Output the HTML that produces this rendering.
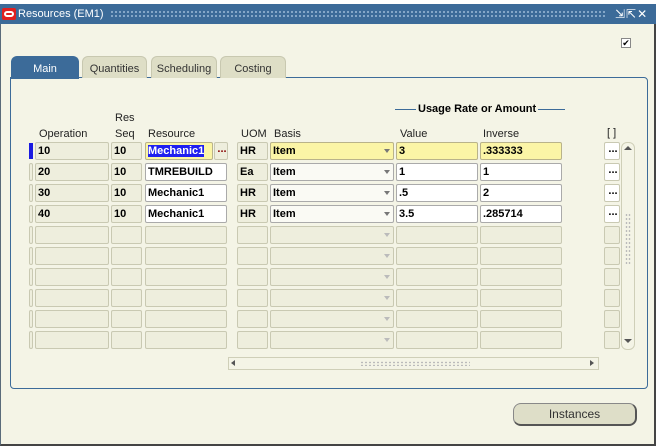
<!DOCTYPE html>
<html><head><meta charset="utf-8"><style>
*{box-sizing:border-box;margin:0;padding:0}
body{width:660px;height:448px;background:#fff;position:relative;overflow:hidden;font-family:"Liberation Sans",sans-serif;font-size:11px;color:#000}
.a{position:absolute}
.win{left:0;top:4px;width:656px;height:442px;background:#f4f4e6;border:1px solid #5a6b7a;border-right:2px solid #444;border-bottom:2px solid #444}
.title{left:0;top:4px;width:656px;height:20px;background:#3c6b99}
.dots{left:110px;top:10px;width:495px;height:9px;background-image:radial-gradient(#8fb0cf 35%,transparent 40%);background-size:4px 4px}
.tab{top:56px;height:22px;border-radius:6px 6px 0 0;background:#dedec6;font-size:11px;text-align:center;line-height:24px;color:#333;border:1px solid #c8c8b0;border-bottom:none}
.panel{left:10px;top:77px;width:638px;height:312px;border:1px solid #3c6b99;border-radius:0 4px 4px 4px}
.f{height:18px;border:1px solid #c9c9b2;background:#eeeedd;border-radius:2px;font-weight:bold;font-size:11px;line-height:16px;padding-left:2px}
.w{background:#fff;border-color:#aaa;}
.y{background:#fbf5a6;border-color:#b9b38a}
.lab{font-size:11px;color:#222}
.ar{position:absolute;right:3px;top:6px;width:0;height:0;border-left:3px solid transparent;border-right:3px solid transparent;border-top:4px solid #777}
.ind{width:4px;height:18px;border:1px solid #c9c9b2;border-radius:2px;background:#eeeedd}
.dd{font-weight:bold;text-align:center;line-height:12px}
</style></head><body>
<div class="a win"></div>
<div class="a title"></div>
<div class="a" style="left:2px;top:8px;width:14px;height:12px;background:#e02020;border-radius:2px"></div>
<div class="a" style="left:4px;top:11px;width:10px;height:6px;border:2px solid #fff;border-radius:4px"></div>
<div class="a" style="left:18px;top:8px;color:#fff;font-size:11px">Resources (EM1)</div>
<div class="a dots"></div>
<div class="a" style="left:615px;top:7px;color:#fff;font-size:12px;letter-spacing:1px">⇲⇱✕</div>
<div class="a" style="left:621px;top:38px;width:10px;height:10px;border:1px solid #888;background:#fff;font-size:9px;line-height:8px;text-align:center">✔</div>

<div class="a panel"></div>
<div class="a tab" style="left:11px;width:68px;background:#3c6b99;color:#fff;border-color:#3c6b99;height:23px">Main</div>
<div class="a tab" style="left:82px;width:65px">Quantities</div>
<div class="a tab" style="left:151px;width:66px">Scheduling</div>
<div class="a tab" style="left:220px;width:66px">Costing</div>

<div class="a" style="left:395px;top:109px;width:170px;border-top:1px solid #3c6b99"></div>
<div class="a" style="left:416px;top:103px;background:#f4f4e6;padding:0 2px;font-weight:bold;font-size:11px">Usage Rate or Amount</div>
<div class="a lab" style="left:115px;top:112px">Res</div>
<div class="a lab" style="left:39px;top:128px">Operation</div>
<div class="a lab" style="left:115px;top:128px">Seq</div>
<div class="a lab" style="left:148px;top:128px">Resource</div>
<div class="a lab" style="left:241px;top:128px">UOM</div>
<div class="a lab" style="left:274px;top:128px">Basis</div>
<div class="a lab" style="left:400px;top:128px">Value</div>
<div class="a lab" style="left:483px;top:128px">Inverse</div>
<div class="a lab" style="left:607px;top:127px">[ ]</div>

<div class="a" style="left:29px;top:143px;width:4px;height:16px;background:#1a1ae0"></div>
<div class="a f" style="left:35px;top:142px;width:74px">10</div>
<div class="a f" style="left:111px;top:142px;width:31px">10</div>
<div class="a f y" style="left:145px;top:142px;width:68px"><span style="background:#1f1ff0;color:#fff">Mechanic1</span></div>
<div class="a f dd" style="left:214px;top:142px;width:14px;color:#800">...</div>
<div class="a f" style="left:237px;top:142px;width:31px">HR</div>
<div class="a f y" style="left:270px;top:142px;width:124px">Item<i class="ar"></i></div>
<div class="a f y" style="left:396px;top:142px;width:82px">3</div>
<div class="a f y" style="left:480px;top:142px;width:82px">.333333</div>
<div class="a f dd" style="left:604px;top:142px;width:16px;background:#fff">...</div>
<div class="a ind" style="left:29px;top:163px"></div>
<div class="a f" style="left:35px;top:163px;width:74px">20</div>
<div class="a f" style="left:111px;top:163px;width:31px">10</div>
<div class="a f w" style="left:145px;top:163px;width:82px">TMREBUILD</div>
<div class="a f" style="left:237px;top:163px;width:31px">Ea</div>
<div class="a f w" style="left:270px;top:163px;width:124px;background:#fafaf4">Item<i class="ar"></i></div>
<div class="a f w" style="left:396px;top:163px;width:82px">1</div>
<div class="a f w" style="left:480px;top:163px;width:82px">1</div>
<div class="a f dd" style="left:604px;top:163px;width:16px;background:#fff">...</div>
<div class="a ind" style="left:29px;top:184px"></div>
<div class="a f" style="left:35px;top:184px;width:74px">30</div>
<div class="a f" style="left:111px;top:184px;width:31px">10</div>
<div class="a f w" style="left:145px;top:184px;width:82px">Mechanic1</div>
<div class="a f" style="left:237px;top:184px;width:31px">HR</div>
<div class="a f w" style="left:270px;top:184px;width:124px;background:#fafaf4">Item<i class="ar"></i></div>
<div class="a f w" style="left:396px;top:184px;width:82px">.5</div>
<div class="a f w" style="left:480px;top:184px;width:82px">2</div>
<div class="a f dd" style="left:604px;top:184px;width:16px;background:#fff">...</div>
<div class="a ind" style="left:29px;top:205px"></div>
<div class="a f" style="left:35px;top:205px;width:74px">40</div>
<div class="a f" style="left:111px;top:205px;width:31px">10</div>
<div class="a f w" style="left:145px;top:205px;width:82px">Mechanic1</div>
<div class="a f" style="left:237px;top:205px;width:31px">HR</div>
<div class="a f w" style="left:270px;top:205px;width:124px;background:#fafaf4">Item<i class="ar"></i></div>
<div class="a f w" style="left:396px;top:205px;width:82px">3.5</div>
<div class="a f w" style="left:480px;top:205px;width:82px">.285714</div>
<div class="a f dd" style="left:604px;top:205px;width:16px;background:#fff">...</div>

<div class="a ind" style="left:29px;top:226px"></div><div class="a f" style="left:35px;top:226px;width:74px"></div><div class="a f" style="left:111px;top:226px;width:31px"></div><div class="a f" style="left:145px;top:226px;width:82px"></div><div class="a f" style="left:237px;top:226px;width:31px"></div><div class="a f" style="left:270px;top:226px;width:124px"><i class="ar" style="border-top-color:#bbb"></i></div><div class="a f" style="left:396px;top:226px;width:82px"></div><div class="a f" style="left:480px;top:226px;width:82px"></div><div class="a f" style="left:604px;top:226px;width:16px"></div>
<div class="a ind" style="left:29px;top:247px"></div><div class="a f" style="left:35px;top:247px;width:74px"></div><div class="a f" style="left:111px;top:247px;width:31px"></div><div class="a f" style="left:145px;top:247px;width:82px"></div><div class="a f" style="left:237px;top:247px;width:31px"></div><div class="a f" style="left:270px;top:247px;width:124px"><i class="ar" style="border-top-color:#bbb"></i></div><div class="a f" style="left:396px;top:247px;width:82px"></div><div class="a f" style="left:480px;top:247px;width:82px"></div><div class="a f" style="left:604px;top:247px;width:16px"></div>
<div class="a ind" style="left:29px;top:268px"></div><div class="a f" style="left:35px;top:268px;width:74px"></div><div class="a f" style="left:111px;top:268px;width:31px"></div><div class="a f" style="left:145px;top:268px;width:82px"></div><div class="a f" style="left:237px;top:268px;width:31px"></div><div class="a f" style="left:270px;top:268px;width:124px"><i class="ar" style="border-top-color:#bbb"></i></div><div class="a f" style="left:396px;top:268px;width:82px"></div><div class="a f" style="left:480px;top:268px;width:82px"></div><div class="a f" style="left:604px;top:268px;width:16px"></div>
<div class="a ind" style="left:29px;top:289px"></div><div class="a f" style="left:35px;top:289px;width:74px"></div><div class="a f" style="left:111px;top:289px;width:31px"></div><div class="a f" style="left:145px;top:289px;width:82px"></div><div class="a f" style="left:237px;top:289px;width:31px"></div><div class="a f" style="left:270px;top:289px;width:124px"><i class="ar" style="border-top-color:#bbb"></i></div><div class="a f" style="left:396px;top:289px;width:82px"></div><div class="a f" style="left:480px;top:289px;width:82px"></div><div class="a f" style="left:604px;top:289px;width:16px"></div>
<div class="a ind" style="left:29px;top:310px"></div><div class="a f" style="left:35px;top:310px;width:74px"></div><div class="a f" style="left:111px;top:310px;width:31px"></div><div class="a f" style="left:145px;top:310px;width:82px"></div><div class="a f" style="left:237px;top:310px;width:31px"></div><div class="a f" style="left:270px;top:310px;width:124px"><i class="ar" style="border-top-color:#bbb"></i></div><div class="a f" style="left:396px;top:310px;width:82px"></div><div class="a f" style="left:480px;top:310px;width:82px"></div><div class="a f" style="left:604px;top:310px;width:16px"></div>
<div class="a ind" style="left:29px;top:331px"></div><div class="a f" style="left:35px;top:331px;width:74px"></div><div class="a f" style="left:111px;top:331px;width:31px"></div><div class="a f" style="left:145px;top:331px;width:82px"></div><div class="a f" style="left:237px;top:331px;width:31px"></div><div class="a f" style="left:270px;top:331px;width:124px"><i class="ar" style="border-top-color:#bbb"></i></div><div class="a f" style="left:396px;top:331px;width:82px"></div><div class="a f" style="left:480px;top:331px;width:82px"></div><div class="a f" style="left:604px;top:331px;width:16px"></div>

<div class="a" style="left:621px;top:142px;width:14px;height:208px;border:1px solid #cfcfb8;border-radius:6px;background:#f4f4e6"></div>
<div class="a" style="left:624px;top:146px;width:0;height:0;border-left:4px solid transparent;border-right:4px solid transparent;border-bottom:4px solid #555"></div>
<div class="a" style="left:624px;top:339px;width:0;height:0;border-left:4px solid transparent;border-right:4px solid transparent;border-top:4px solid #555"></div>
<div class="a" style="left:625px;top:213px;width:6px;height:52px;background-image:radial-gradient(#bbb 35%,transparent 40%);background-size:3px 4px"></div>
<div class="a" style="left:228px;top:357px;width:371px;height:13px;border:1px solid #cfcfb8;background:#f4f4e6"></div>
<div class="a" style="left:231px;top:360px;width:0;height:0;border-top:3px solid transparent;border-bottom:3px solid transparent;border-right:4px solid #555"></div>
<div class="a" style="left:590px;top:360px;width:0;height:0;border-top:3px solid transparent;border-bottom:3px solid transparent;border-left:4px solid #555"></div>
<div class="a" style="left:360px;top:361px;width:110px;height:5px;background-image:radial-gradient(#bbb 35%,transparent 40%);background-size:4px 3px"></div>

<div class="a" style="left:513px;top:403px;width:124px;height:23px;border:1px solid #888;border-right:2px solid #555;border-bottom:2px solid #555;border-radius:8px;background:#dedec8;text-align:center;line-height:20px;font-size:12px;color:#333">Instances</div>
</body></html>
